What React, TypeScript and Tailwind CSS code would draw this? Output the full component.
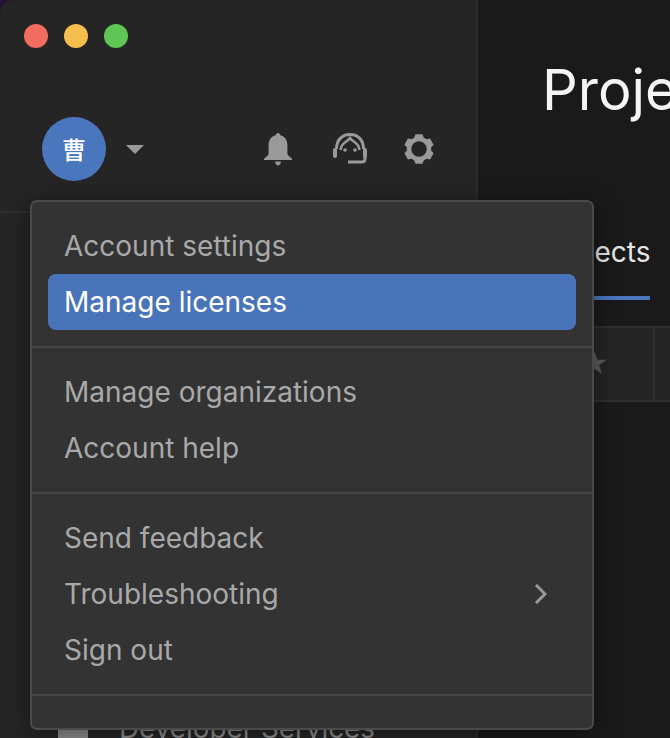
const menuSections = [
  [{ label: "Account settings" }, { label: "Manage licenses", active: true }],
  [{ label: "Manage organizations" }, { label: "Account help" }],
  [{ label: "Send feedback" }, { label: "Troubleshooting", hasSub: true }, { label: "Sign out" }]
];

function BellIcon() {
  return (
    <svg width="28" height="33" viewBox="0 0 28 33" fill="#9a9a9a">
      <path d="M14 0c1.300 0 2.200 1 2.300 2.300C20.800 3.400 23.400 7 23.400 12v8.500c0 1.600 2.200 3.300 4.600 5.300v1.200H0v-1.200c2.400-2 4.600-3.700 4.600-5.300V12c0-5 2.600-8.600 7.100-9.700C11.800 1 12.700 0 14 0z" />
      <path d="M11 28.500h6c-.3 2.300-1.400 4-3 4s-2.700-1.700-3-4z" />
    </svg>
  );
}

function SupportIcon() {
  return (
    <svg width="36" height="32" viewBox="0 0 36 32" fill="none" stroke="#9a9a9a" className="ml-1">
      <path d="M4.500 16C4.500 7 10 1.500 18 1.500S31.500 7 31.500 16" strokeWidth="3" />
      <path d="M8.500 17c.5-4 2-6 5-8 2-1.300 3.500-2.500 4.500-4 1 1.500 2.500 2.700 4.500 4 3 2 4.500 4 5 8" strokeWidth="2.500" />
      <rect x="1" y="15" width="4" height="10" rx="2" fill="#9a9a9a" stroke="none" />
      <rect x="31" y="15" width="4" height="10" rx="2" fill="#9a9a9a" stroke="none" />
      <path d="M33 24v1.500c0 2.500-1 3.500-3 3.500H16" strokeWidth="3" />
      <circle cx="13" cy="17" r="1.800" fill="#9a9a9a" stroke="none" />
      <circle cx="23" cy="17" r="1.800" fill="#9a9a9a" stroke="none" />
    </svg>
  );
}

function GearIcon() {
  return (
    <svg width="30" height="30" viewBox="0 0 30 30" fill="#9a9a9a">
      <circle cx="15" cy="15" r="10" fill="none" stroke="#9a9a9a" strokeWidth="4.500" />
      {[0, 60, 120, 180, 240, 300].map((angle) => (
        <path key={angle} d="M11.500 0.200h7l1.500 4.300h-10z" transform={`rotate(${angle} 15 15)`} />
      ))}
    </svg>
  );
}

function ChevronIcon() {
  return (
    <svg width="12" height="20" viewBox="0 0 12 20" fill="none" stroke="#9a9a9a" strokeWidth="3" strokeLinecap="square">
      <path d="M2 2l8 8-8 8" />
    </svg>
  );
}

function AccountMenu() {
  return (
    <div className="absolute left-[30px] top-[200px] z-20 h-[530px] w-[564px] rounded-[7px] border-2 border-[#4a4a4a] bg-[#333333] shadow-[0_4px_24px_rgba(0,0,0,0.45)]">
      {menuSections.map((section, i) => (
        <div key={i} className="border-b-2 border-[#464646] py-4">
          {section.map((item) => (
            <div
              key={item.label}
              className={
                item.active
                  ? "mx-4 flex h-14 items-center rounded-lg bg-[#4a74b9] px-4 text-white"
                  : "mx-4 flex h-14 items-center justify-between pl-4 pr-[29px] text-[#a9a9a9]"
              }
            >
              <span>{item.label}</span>
              {item.hasSub ? <ChevronIcon /> : null}
            </div>
          ))}
        </div>
      ))}
    </div>
  );
}

export default function App() {
  return (
    <div className="relative h-[738px] w-[670px] overflow-hidden bg-[#2a1038] font-['Inter',sans-serif] text-[28px]">
      <div className="flex h-full overflow-hidden rounded-tl-[14px] bg-[#1a1a1a]">
        <aside className="flex w-[478px] shrink-0 flex-col border-r-2 border-[#2c2c2c] bg-[#252525]">
          <div className="flex h-[213px] flex-col border-b-2 border-[#2f2f2f]">
            <div className="flex gap-4 pl-6 pt-6">
              <span className="h-6 w-6 rounded-full bg-[#f26d60]" />
              <span className="h-6 w-6 rounded-full bg-[#f6be4f]" />
              <span className="h-6 w-6 rounded-full bg-[#5fc554]" />
            </div>
            <div className="mt-[69px] flex items-center pl-[42px] pr-[42px]">
              <div className="flex h-16 w-16 items-center justify-center rounded-full bg-[#4a76bd] font-['Noto_Sans_CJK_SC',sans-serif] text-[24px] font-medium text-white">
                曹
              </div>
              <div className="ml-5 h-0 w-0 border-x-[9px] border-t-[9px] border-x-transparent border-t-[#9a9a9a]" />
              <div className="ml-auto flex items-center gap-9">
                <BellIcon />
                <SupportIcon />
                <GearIcon />
              </div>
            </div>
          </div>
          <div className="flex flex-1 flex-col justify-end">
            <div className="mb-[-12px] flex items-center gap-[31px] pl-[58px] text-[27.8px] text-[#8e8e8e]">
              <div className="h-[30px] w-[30px] rounded-[3px] bg-[#8e8e8e]" />
              <span>Developer Services</span>
            </div>
          </div>
        </aside>
        <main className="min-w-0 flex-1">
          <h1 className="ml-[64px] mt-[54px] whitespace-nowrap text-[56px] font-normal leading-[72px] text-[#f5f5f5]">Projects</h1>
          <div className="ml-[65px] mt-[110px] w-[107px] whitespace-nowrap border-b-4 border-[#4a76bd] pb-[28px] leading-[32px] text-[#e6e6e6]">
            Projects
          </div>
          <div className="mt-[26px] flex h-[76px] border-y-2 border-[#2f2f2f] bg-[#252525]">
            <div className="flex w-[177px] shrink-0 items-center justify-end border-r-2 border-[#303030] pr-[44px] text-[28px] leading-none text-[#5c5c5c]">
              ★
            </div>
          </div>
        </main>
      </div>
      <AccountMenu />
    </div>
  );
}
